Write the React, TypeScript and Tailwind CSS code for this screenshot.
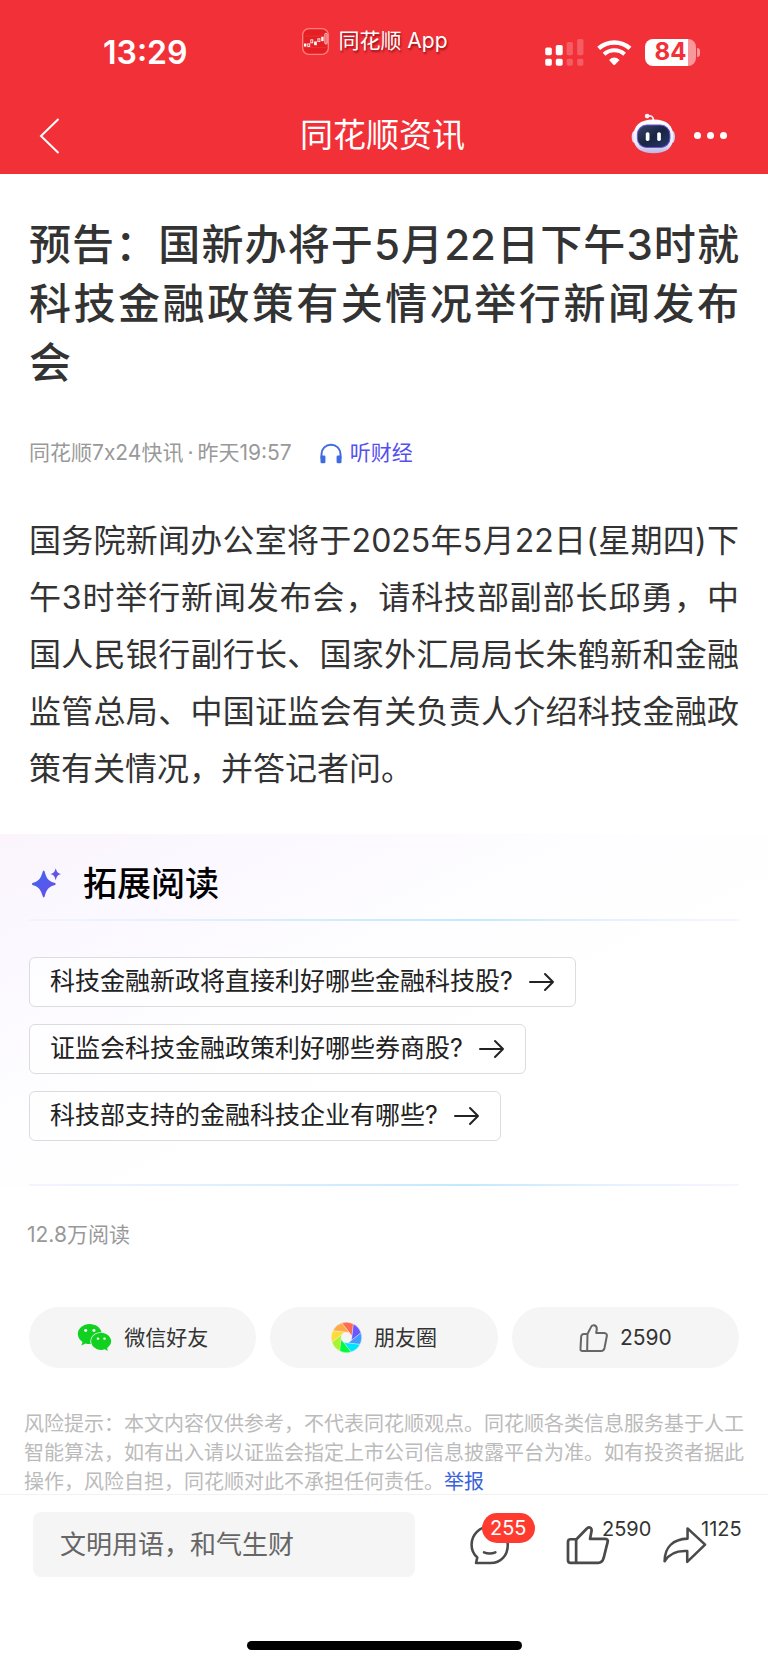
import type { ReactNode } from "react";
import { FaWeixin } from "react-icons/fa";

const QUESTIONS = [
  "科技金融新政将直接利好哪些金融科技股?",
  "证监会科技金融政策利好哪些券商股?",
  "科技部支持的金融科技企业有哪些?",
];

const BLADES = [
  "#ff6b4f",
  "#6b57ff",
  "#409cff",
  "#00e5ff",
  "#00fb3c",
  "#a6f52f",
  "#fbdc3b",
  "#ffaa47",
];

function polar(radius: number, deg: number) {
  const rad = (deg * Math.PI) / 180;
  return `${(radius * Math.cos(rad)).toFixed(2)} ${(radius * Math.sin(rad)).toFixed(2)}`;
}

function ApertureIcon() {
  return (
    <svg viewBox="-46 -46 92 92" className="size-[31px]" aria-hidden="true">
      {BLADES.map((color, i) => {
        const n = -39 + i * 45;
        return (
          <path
            key={color}
            d={`M${polar(45, n - 69)} A45 45 0 0 1 ${polar(45, n - 24)} L${polar(17, n + 22)} Z`}
            fill={color}
            stroke="#f5f5f5"
            strokeWidth="1"
          />
        );
      })}
    </svg>
  );
}

function AppLogo() {
  return (
    <svg viewBox="0 0 80 80" className="size-[27px]" aria-hidden="true">
      <rect x="2" y="2" width="76" height="76" rx="18" fill="#e51f24" stroke="#ff7f80" strokeWidth="4" />
      <path d="M8 24H72M8 58H72" stroke="#f0393c" strokeWidth="2" />
      <g fill="#fff">
        <rect x="6" y="46" width="7" height="9" />
        <rect x="36" y="40" width="8" height="11" />
        <rect x="57" y="26" width="7" height="13" />
      </g>
      <g fill="none" stroke="#fff" strokeWidth="2.5">
        <rect x="17" y="47" width="6" height="8" />
        <rect x="26" y="35" width="6" height="9" />
        <rect x="47" y="32" width="6" height="8" />
        <rect x="68" y="16" width="6" height="31" rx="2" />
      </g>
    </svg>
  );
}

function SignalIcon() {
  return (
    <svg viewBox="0 0 117 82" className="h-[27px] w-[39px]" fill="#fff" aria-hidden="true">
      <rect x="0" y="26" width="20" height="23" rx="5" />
      <rect x="0" y="60" width="20" height="21" rx="5" />
      <rect x="32" y="18" width="21" height="31" rx="5" />
      <rect x="32" y="60" width="21" height="21" rx="5" />
      <g fillOpacity="0.22">
        <rect x="65" y="9" width="19" height="40" rx="5" />
        <rect x="65" y="60" width="19" height="21" rx="5" />
        <rect x="97" y="0" width="19" height="49" rx="5" />
        <rect x="97" y="60" width="19" height="21" rx="5" />
      </g>
    </svg>
  );
}

function WifiIcon() {
  return (
    <svg viewBox="640 114 104 80" className="h-[27px] w-[35px]" aria-hidden="true">
      <path d="M645 142A70 70 0 0 1 738 142" fill="none" stroke="#fff" strokeWidth="13" />
      <path d="M661 159A45 45 0 0 1 722 159" fill="none" stroke="#fff" strokeWidth="12" />
      <path d="M676 176Q691 162 707 176L694 190Q691 193 688 190Z" fill="#fff" />
    </svg>
  );
}

function RobotIcon() {
  return (
    <svg viewBox="742 340 134 122" className="h-[41px] w-[45px]" aria-hidden="true">
      <defs>
        <linearGradient id="robot-shell" x1="0" y1="0" x2="0" y2="1">
          <stop offset="0" stopColor="#fff" />
          <stop offset="0.7" stopColor="#eceafb" />
          <stop offset="1" stopColor="#b9b4e4" />
        </linearGradient>
        <linearGradient id="robot-visor" x1="0" y1="0" x2="1" y2="1">
          <stop offset="0" stopColor="#39466b" />
          <stop offset="0.5" stopColor="#1a2443" />
          <stop offset="1" stopColor="#233a66" />
        </linearGradient>
      </defs>
      <path d="M790 350Q808 344 809 362" fill="none" stroke="#f3f1fc" strokeWidth="5" />
      <circle cx="790" cy="349" r="7" fill="#f3f1fc" />
      <ellipse cx="752" cy="411" rx="8" ry="18" fill="#d8d8f4" />
      <ellipse cx="865" cy="411" rx="8" ry="18" fill="#c9cdf2" />
      <path
        d="M809 359C850 359 868 378 868 411C868 446 846 460 809 460C772 460 749 446 749 411C749 378 768 359 809 359Z"
        fill="url(#robot-shell)"
      />
      <rect x="761" y="376" width="97" height="67" rx="28" fill="url(#robot-visor)" stroke="#6a55d8" strokeWidth="3" />
      <rect x="786" y="397" width="11" height="26" rx="5" fill="#fff" />
      <rect x="820" y="397" width="11" height="26" rx="5" fill="#fff" />
    </svg>
  );
}

function HeadphonesIcon() {
  return (
    <svg viewBox="62 48 66 64" className="h-[21px] w-[22px]" aria-hidden="true">
      <path d="M66 96V82A29 29 0 0 1 124 82V96" fill="none" stroke="#3f6be0" strokeWidth="6" />
      <rect x="63" y="86" width="15" height="24" rx="4" fill="#3f6be0" />
      <rect x="112" y="86" width="15" height="24" rx="4" fill="#3f6be0" />
    </svg>
  );
}

function SparkleIcon() {
  return (
    <svg viewBox="96 146 88 90" className="h-[30px] w-[29px]" aria-hidden="true">
      <defs>
        <linearGradient id="sparkle" x1="0" y1="0" x2="1" y2="1">
          <stop offset="0" stopColor="#3c68e8" />
          <stop offset="1" stopColor="#6c4cf0" />
        </linearGradient>
      </defs>
      <path
        d="M131 153Q134 153 135 158C140 178 148 186 164 190Q168 191 168 194Q168 197 164 198C148 202 140 210 135 230Q134 235 131 235Q129 235 128 230C122 210 115 202 99 198Q96 197 96 194Q96 191 99 190C115 186 122 178 128 158Q129 153 131 153Z"
        fill="url(#sparkle)"
      />
      <path
        d="M168 146C171 157 174 161 184 164C174 167 171 171 168 183C165 171 162 167 152 164C162 161 165 157 168 146Z"
        fill="#6152ec"
      />
    </svg>
  );
}

function ArrowIcon() {
  return (
    <svg
      viewBox="0 0 26 20"
      className="h-5 w-[26px]"
      fill="none"
      stroke="#222"
      strokeWidth="2"
      strokeLinecap="round"
      strokeLinejoin="round"
      aria-hidden="true"
    >
      <path d="M1 10H24M16 2L24 10L16 18" />
    </svg>
  );
}

function LikeIcon() {
  return (
    <svg
      viewBox="0 0 86 84"
      className="h-7 w-[29px]"
      fill="none"
      stroke="#666"
      strokeWidth="6"
      strokeLinejoin="round"
      aria-hidden="true"
    >
      <path d="M25 30L35 10Q38 3 45 4Q53 6 53 15L51 27H75Q84 28 83 36L76 72Q74 81 66 81H10Q3 81 4 74L6 38Q7 30 14 30ZM25 30L24 81" />
    </svg>
  );
}

function ToolIcon({ viewBox, children }: { viewBox: string; children: ReactNode }) {
  return (
    <svg
      viewBox={viewBox}
      className="h-10 w-11"
      fill="none"
      stroke="#4a4a4a"
      strokeWidth="8"
      strokeLinecap="round"
      strokeLinejoin="round"
      aria-hidden="true"
    >
      {children}
    </svg>
  );
}

function Divider() {
  return (
    <div className="mx-[29px] h-0.5 bg-[linear-gradient(90deg,#f6f3ff_0%,#e0efff_25%,#c3e9fe_62%,#e6f1ff_82%,#f8f5ff_100%)]" />
  );
}

function Header() {
  return (
    <header className="bg-[#f23038] text-white">
      <div className="grid grid-cols-[1fr_auto_1fr] items-start pt-[27px] pr-[18px] pb-[18px]">
        <div className="flex h-[52px] items-center pl-[103px] text-[32px] font-semibold">13:29</div>
        <div className="flex h-7 items-center gap-[9px] text-[21px] text-shadow-[1px_2px_2px_rgb(90_0_0/0.6)]">
          <AppLogo />
          <span>同花顺 App</span>
        </div>
        <div className="flex h-[50px] items-center justify-end gap-[13px] pr-[50px]">
          <SignalIcon />
          <WifiIcon />
          <div className="flex items-center gap-px">
            <div className="flex h-[27px] w-[51px] items-center justify-center rounded-lg bg-[linear-gradient(90deg,#fff_84%,#f9989c_84%)] text-2xl font-bold text-[#f23038]">
              84
            </div>
            <div className="h-[9px] w-[3px] rounded-r-full bg-[#f9989c]" />
          </div>
        </div>
      </div>
      <div className="grid h-[77px] grid-cols-[1fr_auto_1fr] items-center pr-[41px] pl-[38px]">
        <button type="button" aria-label="返回" className="w-6">
          <svg viewBox="0 0 22 36" className="h-9 w-[22px]" fill="none" stroke="#fff" strokeWidth="2" aria-hidden="true">
            <path d="M20.500 1L3 18L20.500 35" />
          </svg>
        </button>
        <h1 className="text-[33px]">同花顺资讯</h1>
        <div className="flex items-center justify-end gap-[18px]">
          <button type="button" aria-label="智能助手" className="-mt-1">
            <RobotIcon />
          </button>
          <button type="button" aria-label="更多" className="flex gap-[6px]">
            <span className="size-[7px] rounded-full bg-white" />
            <span className="size-[7px] rounded-full bg-white" />
            <span className="size-[7px] rounded-full bg-white" />
          </button>
        </div>
      </div>
    </header>
  );
}

function Article() {
  return (
    <article className="px-[29px] pt-[41px] pb-[37px] text-[#333]">
      <h2 className="text-justify text-[42px] leading-[59px] font-medium">
        预告：国新办将于5月22日下午3时就科技金融政策有关情况举行新闻发布会
      </h2>
      <div className="mt-[46px] flex items-center text-[21px] leading-[30px] text-[#999]">
        <span>同花顺7x24快讯</span>
        <span className="mx-1">·</span>
        <span>昨天19:57</span>
        <a href="#listen" className="ml-7 flex items-center gap-2 text-[#5450ee]">
          <HeadphonesIcon />
          听财经
        </a>
      </div>
      <p className="mt-11 text-justify text-[32px] leading-[57px]">
        国务院新闻办公室将于2025年5月22日(星期四)下午3时举行新闻发布会，请科技部副部长邱勇，中国人民银行副行长、国家外汇局局长朱鹤新和金融监管总局、中国证监会有关负责人介绍科技金融政策有关情况，并答记者问。
      </p>
    </article>
  );
}

function FurtherReading() {
  return (
    <section className="bg-[linear-gradient(155deg,#fbf4fd_0%,#fbf9ff_20%,#fefdff_42%,#fff_60%)] pt-[13px]">
      <div className="flex h-[72px] items-center gap-[22px] px-8">
        <SparkleIcon />
        <h3 className="text-[34px] font-medium text-black">拓展阅读</h3>
      </div>
      <Divider />
      <ul className="flex flex-col items-start gap-[17px] px-[29px] pt-9 pb-[43px]">
        {QUESTIONS.map((question) => (
          <li key={question}>
            <a
              href="#ask"
              className="flex h-[50px] items-center gap-4 rounded-md border border-[#dcdcdf] bg-white/60 px-5 text-[25px] text-[#222]"
            >
              {question}
              <ArrowIcon />
            </a>
          </li>
        ))}
      </ul>
      <Divider />
    </section>
  );
}

function ShareButton({ icon, children }: { icon: ReactNode; children: ReactNode }) {
  return (
    <button
      type="button"
      className="flex h-[61px] flex-1 items-center justify-center gap-3 rounded-full bg-[#f5f5f5] text-[21px] text-[#333]"
    >
      {icon}
      {children}
    </button>
  );
}

function BottomBar() {
  return (
    <footer className="border-t border-[#f2f2f2] pb-[15px]">
      <div className="flex items-center pt-[17px] pr-[26px] pl-[33px]">
        <input
          type="text"
          aria-label="评论"
          placeholder="文明用语，和气生财"
          className="h-[65px] min-w-0 flex-1 rounded-lg bg-[#f5f5f5] px-[27px] text-[26px] text-[#333] outline-none placeholder:text-[#666]"
        />
        <div className="ml-[53px] flex text-xl leading-6 text-[#333]">
          <button type="button" aria-label="评论 255" className="relative w-[98px]">
            <ToolIcon viewBox="0 0 128 126">
              <path d="M20 120L24 102C11 91 6 76 6 62A57 57 0 0 1 120 62C120 96 98 120 66 120Z" />
              <path d="M45 86Q63 94 81 86" />
            </ToolIcon>
            <span className="absolute -top-3 left-[14px] rounded-full bg-[#ff3b30] px-2 py-[3px] text-white">255</span>
          </button>
          <button type="button" aria-label="点赞 2590" className="relative w-[97px]">
            <ToolIcon viewBox="0 0 128 118">
              <path d="M30 42L60 11Q66 4 72 9Q76 13 74 20L70 41H114Q124 41 122 50L110 98Q106 112 94 112H13Q5 112 5 104V50Q5 42 13 42ZM29 42V112" />
            </ToolIcon>
            <span className="absolute -top-2 left-[36px]">2590</span>
          </button>
          <button type="button" aria-label="分享 1125" className="relative w-[79px]">
            <ToolIcon viewBox="0 0 138 118">
              <path d="M5 110C5 65 32 41 77 39V7L132 58L76 112V78C45 76 20 85 5 110Z" />
            </ToolIcon>
            <span className="absolute -top-2 left-[38px]">1125</span>
          </button>
        </div>
      </div>
      <div className="mx-auto mt-16 h-[9px] w-[275px] rounded-full bg-black" />
    </footer>
  );
}

export default function App() {
  return (
    <div className="min-h-screen bg-white font-[Inter,'Noto_Sans_CJK_SC',sans-serif]" lang="zh-CN">
      <Header />
      <main>
        <Article />
        <FurtherReading />
        <p className="mt-[34px] px-[27px] text-[21px] leading-[30px] text-[#999]">12.8万阅读</p>
        <div className="mt-[57px] flex gap-[14px] px-[29px]">
          <ShareButton icon={<FaWeixin className="h-[31px] w-[35px] text-[#10d020]" aria-hidden="true" />}>
            微信好友
          </ShareButton>
          <ShareButton icon={<ApertureIcon />}>朋友圈</ShareButton>
          <ShareButton icon={<LikeIcon />}>2590</ShareButton>
        </div>
        <p className="-mb-[3px] mt-[42px] px-6 text-xl leading-[29px] text-[#bbb]">
          风险提示：本文内容仅供参考，不代表同花顺观点。同花顺各类信息服务基于人工智能算法，如有出入请以证监会指定上市公司信息披露平台为准。如有投资者据此操作，风险自担，同花顺对此不承担任何责任。
          <a href="#report" className="text-[#3a62d8]">
            举报
          </a>
        </p>
      </main>
      <BottomBar />
    </div>
  );
}
